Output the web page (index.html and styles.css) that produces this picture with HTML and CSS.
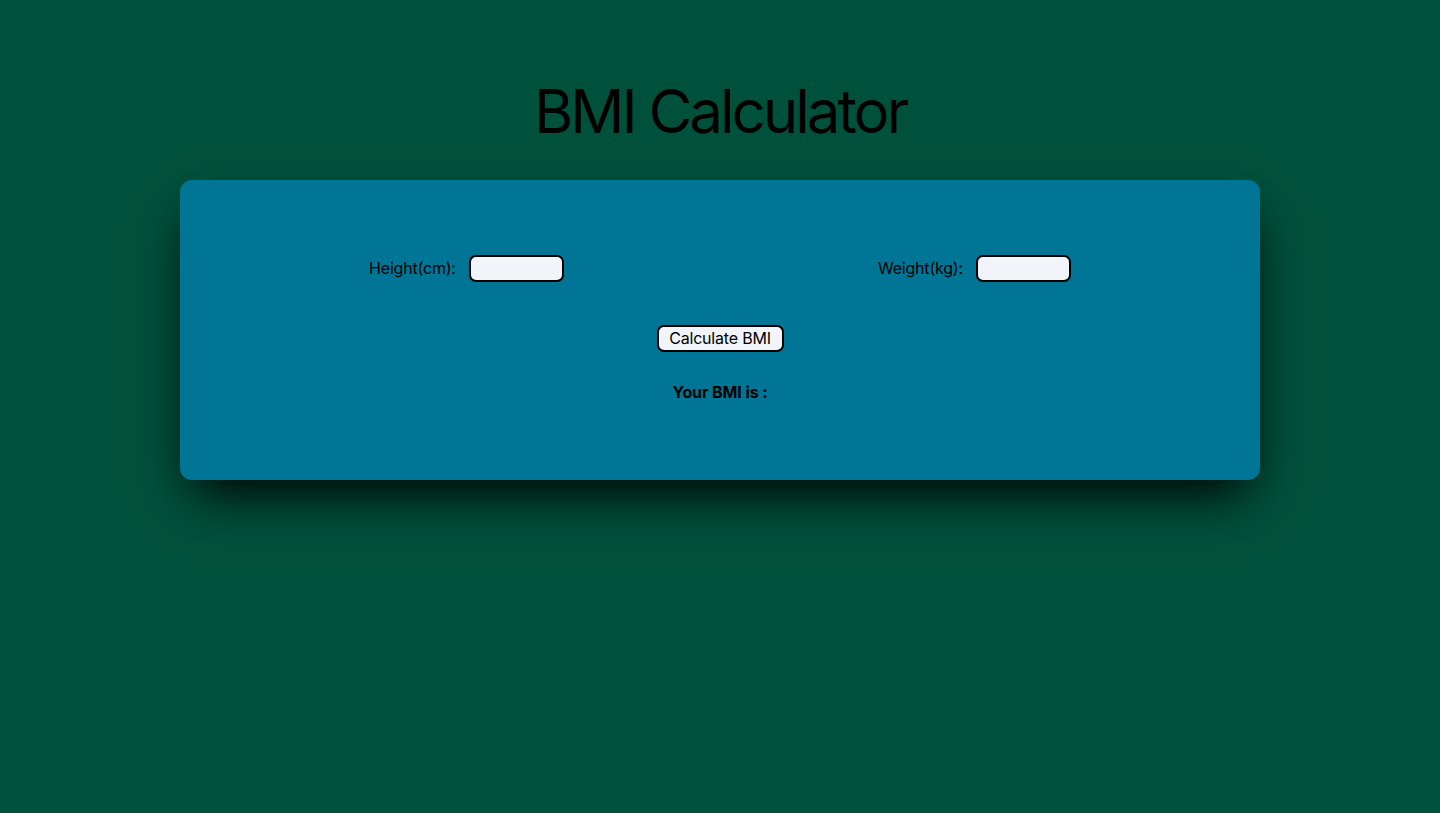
FILE: index.html
```html
<!DOCTYPE html>
<html lang="en">
<head>
<meta charset="utf-8">
<title>BMI Calculator</title>
<link rel="stylesheet" href="styles.css">
</head>
<body>
<main class="page">
  <h1 class="title">BMI Calculator</h1>
  <section class="card">
    <div class="inputs">
      <label class="field">
        <span class="label">Height(cm):</span>
        <input class="box" type="text">
      </label>
      <label class="field">
        <span class="label">Weight(kg):</span>
        <input class="box" type="text">
      </label>
    </div>
    <button class="btn" type="button">Calculate BMI</button>
    <p class="result">Your BMI is :</p>
  </section>
</main>
</body>
</html>
```

FILE: styles.css
```css
* { box-sizing: border-box; }
html, body { margin: 0; padding: 0; }
body {
  background: #00513b;
  font-family: Inter, "Liberation Sans", sans-serif;
  color: #000;
  min-height: 813px;
}
.page {
  display: flex;
  flex-direction: column;
  align-items: center;
  padding-top: 81px;
}
.title {
  margin: 0 0 39px;
  font-size: 60px;
  line-height: 60px;
  font-weight: 400;
  letter-spacing: -3px;
}
.card {
  width: 1080px;
  height: 300px;
  background: #007595;
  border-radius: 12px;
  box-shadow: 0 25px 50px -12px #000;
  padding: 32px;
  display: flex;
  flex-direction: column;
  align-items: center;
  justify-content: center;
}
.inputs {
  width: 100%;
  display: flex;
  justify-content: space-around;
  align-items: center;
  margin-top: -2px;
}
.field {
  display: flex;
  align-items: center;
  gap: 13px;
  font-size: 16px;
  line-height: 24px;
}
.label {
  letter-spacing: -0.2px;
}
.box {
  width: 95px;
  height: 27px;
  border: 2px solid #000;
  border-radius: 7px;
  background: #f1f4f9;
  font: inherit;
  padding: 0 6px;
  outline: none;
}
.btn {
  margin-top: 43px;
  height: 27px;
  width: 127px;
  padding: 0;
  border: 2px solid #000;
  border-radius: 7px;
  background: #f1f4f9;
  font-family: inherit;
  font-size: 16px;
  line-height: 22px;
  letter-spacing: -0.2px;
  color: #000;
}
.result {
  margin: 28px 0 0;
  font-size: 16px;
  line-height: 24px;
  font-weight: 700;
  letter-spacing: -0.1px;
}
```
